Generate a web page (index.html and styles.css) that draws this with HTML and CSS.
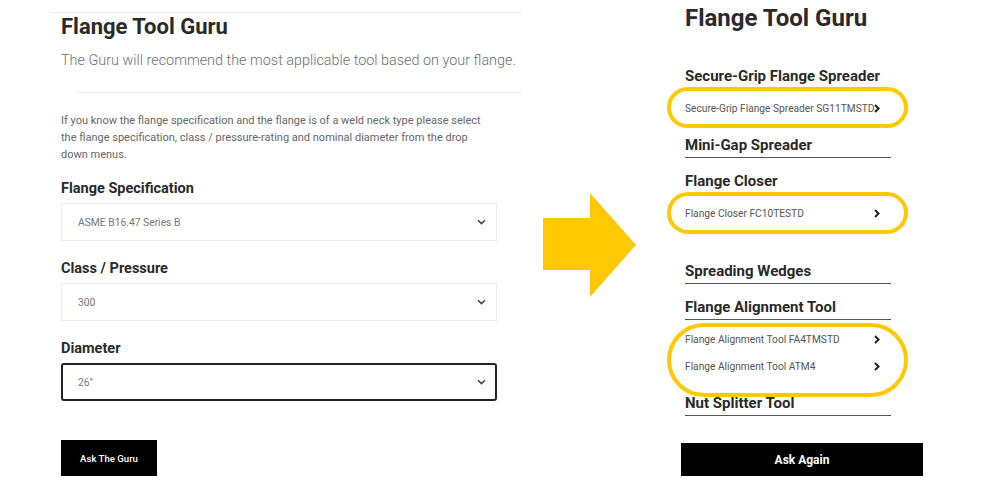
FILE: index.html
```html
<!DOCTYPE html>
<html lang="en">
<head>
<meta charset="utf-8">
<title>Flange Tool Guru</title>
<link rel="stylesheet" href="styles.css">
</head>
<body>
<div class="page">
  <section class="left">
    <div class="left-inner">
      <h1 class="title-l">Flange Tool Guru</h1>
      <p class="subtitle">The Guru will recommend the most applicable tool based on your flange.</p>
    </div>
    <hr class="divider">
    <div class="left-inner">
      <p class="intro">If you know the flange specification and the flange is of a weld neck type please select the flange specification, class / pressure-rating and nominal diameter from the drop down menus.</p>
      <div class="field">
        <div class="label">Flange Specification</div>
        <div class="select"><span>ASME B16.47 Series B</span><svg class="caret" width="9" height="6" viewBox="0 0 9 6"><path d="M1 1.2 L4.5 4.6 L8 1.2" fill="none" stroke="#444" stroke-width="1.5"/></svg></div>
      </div>
      <div class="field">
        <div class="label">Class / Pressure</div>
        <div class="select"><span>300</span><svg class="caret" width="9" height="6" viewBox="0 0 9 6"><path d="M1 1.2 L4.5 4.6 L8 1.2" fill="none" stroke="#444" stroke-width="1.5"/></svg></div>
      </div>
      <div class="field">
        <div class="label">Diameter</div>
        <div class="select select-active"><span>26"</span><svg class="caret" width="9" height="6" viewBox="0 0 9 6"><path d="M1 1.2 L4.5 4.6 L8 1.2" fill="none" stroke="#444" stroke-width="1.5"/></svg></div>
      </div>
      <button class="btn-guru">Ask The Guru</button>
    </div>
  </section>

  <div class="arrow">
    <svg width="93" height="104" viewBox="0 0 93 104"><polygon points="0,25 47,25 47,0 93,52 47,104 47,77 0,77" fill="#FFC800"/></svg>
  </div>

  <section class="right">
    <h1 class="title-r">Flange Tool Guru</h1>
    <div class="sections">
      <div class="sec-title">Secure-Grip Flange Spreader</div>
      <div class="items hl hl-1">
        <div class="item"><span>Secure-Grip Flange Spreader SG11TMSTD</span><svg class="chev" width="6" height="9" viewBox="0 0 6 9"><path d="M1 1 L4.6 4.5 L1 8" fill="none" stroke="#222" stroke-width="2"/></svg></div>
      </div>
      <div class="sec-title">Mini-Gap Spreader</div>
      <div class="sec-title">Flange Closer</div>
      <div class="items items-gap hl hl-2">
        <div class="item"><span>Flange Closer FC10TESTD</span><svg class="chev" width="6" height="9" viewBox="0 0 6 9"><path d="M1 1 L4.6 4.5 L1 8" fill="none" stroke="#222" stroke-width="2"/></svg></div>
      </div>
      <div class="sec-title">Spreading Wedges</div>
      <div class="sec-title">Flange Alignment Tool</div>
      <div class="items hl hl-3">
        <div class="item"><span>Flange Alignment Tool FA4TMSTD</span><svg class="chev" width="6" height="9" viewBox="0 0 6 9"><path d="M1 1 L4.6 4.5 L1 8" fill="none" stroke="#222" stroke-width="2"/></svg></div>
        <div class="item"><span>Flange Alignment Tool ATM4</span><svg class="chev" width="6" height="9" viewBox="0 0 6 9"><path d="M1 1 L4.6 4.5 L1 8" fill="none" stroke="#222" stroke-width="2"/></svg></div>
      </div>
      <div class="sec-title">Nut Splitter Tool</div>
    </div>
    <button class="btn-again">Ask Again</button>
  </section>
</div>
</body>
</html>
```

FILE: styles.css
```css
* { box-sizing: border-box; }
html, body { margin: 0; padding: 0; background: #fff; }
body { font-family: Roboto, "Liberation Sans", Arial, sans-serif; color: #222; }

.page { display: flex; align-items: flex-start; }

/* Left panel */
.left { margin: 12px 0 0 50px; width: 472px; border-top: 1px solid #ededed; }
.left-inner { padding-left: 11px; }
.title-l { margin: 1px 0 0; font-size: 22px; line-height: 26px; font-weight: 700; color: #2a2a2a; }
.subtitle { margin: 11px 0 0; font-size: 14.4px; line-height: 20px; font-weight: 300; color: #6f6f6f; white-space: nowrap; }
.divider { margin: 21px 0 0 26px; border: 0; border-top: 1px solid #efefef; height: 0; }
.intro { margin: 19px 0 0; width: 436px; font-size: 11px; line-height: 17px; color: #666; }
.field { margin-top: 17px; }
.field + .field { margin-top: 19px; }
.label { font-size: 14.5px; line-height: 18px; font-weight: 700; color: #2a2a2a; margin-bottom: 5px; }
.select { width: 436px; height: 38px; border: 1px solid #ececec; display: flex; align-items: center; justify-content: space-between; padding: 0 10px 0 16px; font-size: 10.3px; color: #777; }
.select-active { border: 2px solid #222; border-radius: 3px; padding-left: 15px; padding-right: 9px; }
.caret { display: block; }
.btn-guru { margin-top: 39px; width: 96px; height: 36px; background: #000; color: #fff; border: 0; font-family: inherit; font-size: 9.6px; font-weight: 500; padding: 0; display: block; }

/* Arrow */
.arrow { margin: 193px 0 0 21px; }
.arrow svg { display: block; }

/* Right panel */
.right { margin-left: 45px; width: 242px; }
.title-r { margin: 4px 0 0 4px; font-size: 24px; line-height: 28px; font-weight: 700; color: #2a2a2a; }
.sections { margin: 21px 0 0 4px; width: 206px; }
.sec-title { padding: 14px 0 3px; font-size: 15px; line-height: 18px; font-weight: 700; color: #2a2a2a; border-bottom: 1px solid #555; white-space: nowrap; }
.items { padding-top: 6px; position: relative; }
.items-gap { margin-bottom: 21px; }
.item { height: 27px; display: flex; align-items: center; justify-content: space-between; padding-right: 11px; font-size: 10.2px; color: #555; white-space: nowrap; }
.chev { display: block; flex: none; }
.hl::before { content: ""; position: absolute; left: -18px; right: -17px; border: 4px solid #FFC800; border-radius: 999px; pointer-events: none; }
.hl-1::before { top: -2px; bottom: -6px; }
.hl-2::before { top: -2px; bottom: -7px; }
.hl-3::before { top: 3px; bottom: -17px; }
.btn-again { margin-top: 27px; width: 242px; height: 33px; background: #000; color: #fff; border: 0; font-family: inherit; font-size: 12px; font-weight: 700; padding: 0; display: block; }
```
